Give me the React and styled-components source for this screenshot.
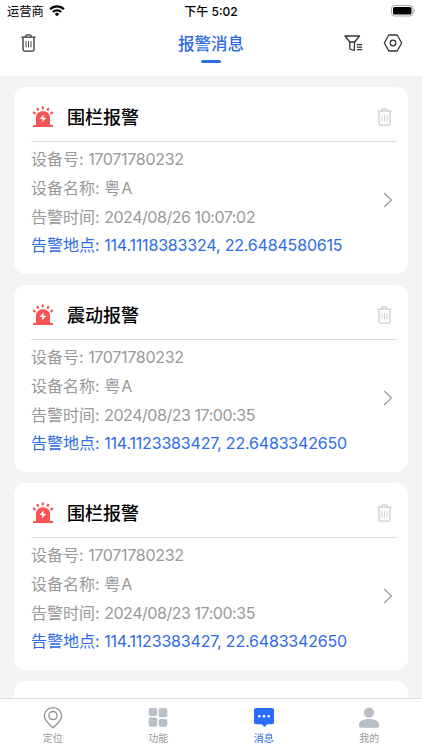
import React from "react";
import styled, { createGlobalStyle } from "styled-components";

const GlobalStyle = createGlobalStyle`
  * {
    box-sizing: border-box;
  }
  body {
    margin: 0;
    overflow: hidden;
    font-family: Inter, "Noto Sans CJK SC", sans-serif;
  }
  svg {
    display: block;
    flex-shrink: 0;
  }
`;

const Container = styled.div`
  display: flex;
  flex-direction: column;
  height: 100vh;
  background: #f4f4f4;
`;

const StatusBar = styled.div`
  display: grid;
  grid-template-columns: 1fr auto 1fr;
  align-items: center;
  height: 21px;
  padding: 0 6px;
  background: #fff;
  color: #000;
  font-size: 12px;
  flex-shrink: 0;
`;

const Carrier = styled.div`
  display: flex;
  align-items: center;
  gap: 5px;
  padding-left: 1px;
  font-size: 12.3px;
`;

const Clock = styled.span`
  font-weight: 500;
  font-size: 12px;
`;

const BatteryWrap = styled.div`
  display: flex;
  justify-content: flex-end;
`;

const Header = styled.header`
  display: grid;
  grid-template-columns: 1fr auto 1fr;
  height: 55px;
  padding: 0 19px;
  background: #fff;
  flex-shrink: 0;
`;

const HeaderActions = styled.div`
  display: flex;
  justify-content: ${(props) => props.$align || "flex-start"};
  gap: 20px;
  height: 44px;
  padding: ${(props) => (props.$align ? "0" : "0 0 0 2px")};
  align-items: center;
`;

const HeaderTitle = styled.div`
  display: flex;
  flex-direction: column;
  align-items: center;
  color: #2e6be6;
  font-size: 16.5px;
  font-weight: 500;
  line-height: 24px;
  padding-top: 11px;

  &::after {
    content: "";
    width: 20px;
    height: 3px;
    margin-top: 4px;
    border-radius: 2px;
    background: #2e6be6;
  }
`;

const List = styled.main`
  flex: 1;
  min-height: 0;
  overflow: hidden;
  display: flex;
  flex-direction: column;
  gap: 11px;
  padding: 11px 14px 0;
`;

const Card = styled.section`
  height: 187px;
  flex-shrink: 0;
  padding: 0 11px 0 17px;
  border-radius: 12px;
  background: #fff;
`;

const CardHeader = styled.div`
  display: flex;
  align-items: center;
  height: 55px;
  padding: 6px 5px 0 1px;
  border-bottom: 1px solid #dedede;
`;

const CardTitle = styled.h2`
  flex: 1;
  margin: 2px 0 0 13px;
  color: #000;
  font-size: 18px;
  font-weight: 500;
  line-height: 26px;
`;

const CardBody = styled.div`
  display: flex;
  justify-content: space-between;
  padding: 3px 4px 0 0;
`;

const Line = styled.p`
  margin: 0;
  color: ${(props) => (props.$link ? "#2e6be6" : "#999")};
  font-size: 16px;
  line-height: 28.8px;
  white-space: nowrap;
`;

const Value = styled.span`
  letter-spacing: ${(props) => props.$spacing || 0}px;
`;

const ArrowWrap = styled.div`
  padding-top: 47px;
`;

const TabBar = styled.nav`
  display: grid;
  grid-template-columns: repeat(4, 1fr);
  height: 52px;
  border-top: 1px solid #dcdcdc;
  background: #fff;
  flex-shrink: 0;
`;

const Tab = styled.div`
  display: flex;
  flex-direction: column;
  align-items: center;
  padding-top: 7px;
  color: ${(props) => (props.$active ? "#2e6be6" : "#999")};
  font-size: 10px;
  line-height: 14px;
  gap: 2px;
`;

const WifiIcon = () => (
  <svg width="16" height="12" viewBox="0 0 16 12" fill="none" stroke="#000" strokeWidth="2.2">
    <path d="M1.1 4.2a9.8 9.8 0 0 1 13.8 0" />
    <path d="M3.8 7a6 6 0 0 1 8.4 0" />
    <path d="M8 11.2 5.8 8.9a3.2 3.2 0 0 1 4.4 0z" fill="#000" stroke="none" />
  </svg>
);

const BatteryIcon = () => (
  <svg width="25" height="12" viewBox="0 0 25 12">
    <rect x="0.5" y="0.5" width="21.5" height="10.5" rx="3" fill="none" stroke="#a5a5a5" />
    <rect x="2" y="2" width="18.5" height="7.5" rx="1.5" fill="#000" />
    <path d="M23.2 4c1.3.5 1.3 3 0 3.6z" fill="#a5a5a5" />
  </svg>
);

const TrashIcon = ({ color = "#333" }) => (
  <svg width="15" height="18" viewBox="0 0 15 18" fill="none" stroke={color} strokeWidth="1.3">
    <path d="M0.4 3.1h14.2M4.7 2.9c0-1.5.5-2 1.3-2h3c.8 0 1.3.5 1.3 2" />
    <path d="M2 3.3v12.3c0 1 .5 1.5 1.5 1.5h8c1 0 1.5-.5 1.5-1.5V3.3" />
    <path d="M5 7.2v6.2M7.5 7.2v6.2M10 7.2v6.2" strokeWidth="0.9" />
  </svg>
);

const FilterIcon = () => (
  <svg width="19" height="17" viewBox="0 0 19 17" fill="none" stroke="#333" strokeWidth="1.3" strokeLinejoin="round">
    <path d="M1 1h14.5L10.6 7H5.8z" />
    <path d="M5.8 7v7l4.4 1.5L10.6 7" />
    <path d="M12.8 9.7h5.4M12.8 12.2h5.4M12.8 14.7h5.4" />
  </svg>
);

const SettingsIcon = () => (
  <svg width="20" height="18" viewBox="0 0 20 18" fill="none" stroke="#333" strokeWidth="1.3" strokeLinejoin="round">
    <path d="M5.8 1h8.4l4.5 8-4.5 8H5.8L1.3 9z" />
    <circle cx="10" cy="9" r="2.8" />
  </svg>
);

const AlarmIcon = () => (
  <svg width="22" height="22" viewBox="0 0 22 22" fill="#f65355">
    <path d="M4 19v-7.5C4 7.7 7 5.2 11 5.2s7 2.5 7 6.3V19z" />
    <rect x="1" y="18.9" width="20" height="2.1" rx="0.6" />
    <path
      d="M1.9 6.7 2.7 7.3M5.6 2.9l.4.9M10.8 1.4v1M16.2 2.9l-.4.9M20.1 6.7l-.8.6"
      stroke="#f65355"
      strokeWidth="2.3"
      strokeLinecap="round"
    />
    <path d="M11.9 8.2 7.6 12.9h3l-.8 3.7 4.6-4.9h-3.1z" fill="#fff" />
  </svg>
);

const ArrowIcon = () => (
  <svg width="10" height="16" viewBox="0 0 10 16" fill="none" stroke="#999" strokeWidth="1.2">
    <path d="M1.2 1 8.4 8l-7.2 7" />
  </svg>
);

const LocationIcon = () => (
  <svg width="20" height="23" viewBox="0 0 20 23" fill="none" stroke="#8f8f8f" strokeWidth="1.3">
    <path d="M10 21.8C6.5 18.5 1.4 14.5 1.4 9.9a8.6 8.3 0 0 1 17.2 0C18.6 14.5 13.5 18.5 10 21.8z" />
    <circle cx="10" cy="9.6" r="4.1" />
  </svg>
);

const GridIcon = () => (
  <svg width="20" height="23" viewBox="0 0 20 23" fill="#b9c0c8">
    <rect x="0.7" y="2" width="8.6" height="8" rx="2" />
    <rect x="10.7" y="2" width="8.6" height="9.3" rx="2" />
    <rect x="0.7" y="11.5" width="8.6" height="9.3" rx="2" />
    <rect x="10.7" y="13" width="8.6" height="7.8" rx="2" />
  </svg>
);

const MessageIcon = () => (
  <svg width="22" height="23" viewBox="0 0 22 23" fill="#276ffb">
    <path d="M3 2h16a2 2 0 0 1 2 2v12.2a2 2 0 0 1-2 2h-4.7L11.5 21l-2.8-2.8H3a2 2 0 0 1-2-2V4a2 2 0 0 1 2-2z" />
    <g fill="#fff">
      <circle cx="6.3" cy="10.2" r="1.3" />
      <circle cx="11" cy="10.2" r="1.3" />
      <circle cx="15.7" cy="10.2" r="1.3" />
    </g>
  </svg>
);

const UserIcon = () => (
  <svg width="22" height="23" viewBox="0 0 22 23" fill="#b9c0c8">
    <circle cx="11" cy="6.6" r="5.1" />
    <path d="M0.9 19.4C0.9 15.2 4.8 13.1 11 13.1s10.1 2.1 10.1 6.3c0 1.6-.5 2.3-2 2.3H2.9c-1.5 0-2-.7-2-2.3z" />
  </svg>
);

const alarms = [
  { id: 1, title: "围栏报警", time: "2024/08/26 10:07:02", place: "114.1118383324, 22.6484580615" },
  { id: 2, title: "震动报警", time: "2024/08/23 17:00:35", place: "114.1123383427, 22.6483342650" },
  { id: 3, title: "围栏报警", time: "2024/08/23 17:00:35", place: "114.1123383427, 22.6483342650" },
];

const tabs = [
  { label: "定位", icon: <LocationIcon /> },
  { label: "功能", icon: <GridIcon /> },
  { label: "消息", icon: <MessageIcon />, active: true },
  { label: "我的", icon: <UserIcon /> },
];

const App = () => {
  return (
    <Container>
      <GlobalStyle />
      <StatusBar>
        <Carrier>
          运营商
          <WifiIcon />
        </Carrier>
        <Clock>下午 5:02</Clock>
        <BatteryWrap>
          <BatteryIcon />
        </BatteryWrap>
      </StatusBar>
      <Header>
        <HeaderActions>
          <TrashIcon />
        </HeaderActions>
        <HeaderTitle>报警消息</HeaderTitle>
        <HeaderActions $align="flex-end">
          <FilterIcon />
          <SettingsIcon />
        </HeaderActions>
      </Header>
      <List>
        {alarms.map((item) => (
          <Card key={item.id}>
            <CardHeader>
              <AlarmIcon />
              <CardTitle>{item.title}</CardTitle>
              <TrashIcon color="#ccc" />
            </CardHeader>
            <CardBody>
              <div>
                <Line>
                  设备号: <Value $spacing={-0.3}>17071780232</Value>
                </Line>
                <Line>
                  设备名称: <Value $spacing={1}>粤A</Value>
                </Line>
                <Line>
                  告警时间: <Value $spacing={-0.45}>{item.time}</Value>
                </Line>
                <Line $link>
                  告警地点: <Value $spacing={-0.18}>{item.place}</Value>
                </Line>
              </div>
              <ArrowWrap>
                <ArrowIcon />
              </ArrowWrap>
            </CardBody>
          </Card>
        ))}
        <Card />
      </List>
      <TabBar>
        {tabs.map((tab) => (
          <Tab key={tab.label} $active={tab.active}>
            {tab.icon}
            {tab.label}
          </Tab>
        ))}
      </TabBar>
    </Container>
  );
};

export default App;
